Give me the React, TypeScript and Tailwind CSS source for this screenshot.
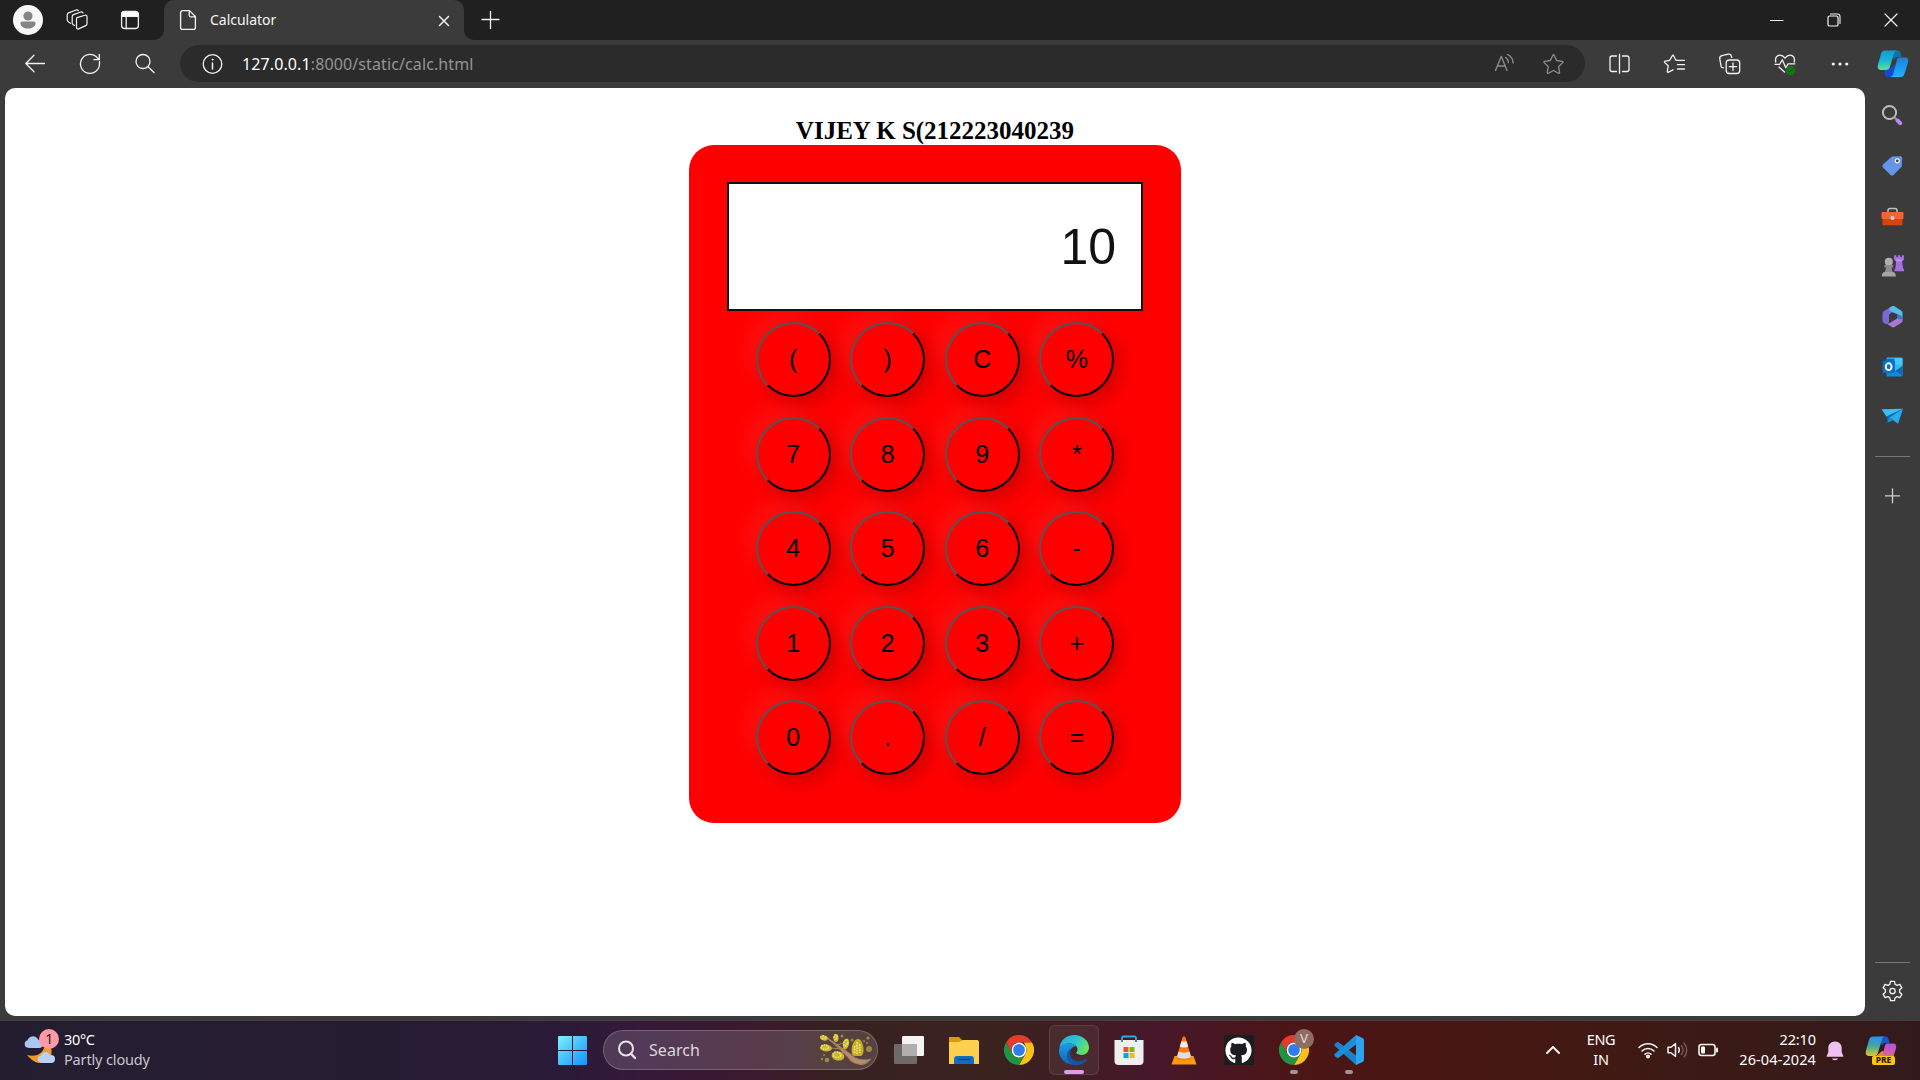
import React from "react";
import { FaGithub } from "react-icons/fa";

type IconProps = { children: React.ReactNode; w?: number; h?: number; className?: string };

/** 1:1 pixel canvas for line and filled icons, defaults to thin white strokes. */
function Icon({ children, w = 24, h = 24, className = "" }: IconProps) {
  return (
    <svg
      width={w}
      height={h}
      viewBox={`0 0 ${w} ${h}`}
      fill="none"
      stroke="#f2f2f2"
      strokeWidth="1.3"
      strokeLinecap="round"
      strokeLinejoin="round"
      className={`block shrink-0 ${className}`}
    >
      {children}
    </svg>
  );
}

function TabStrip() {
  return (
    <div className="flex h-10 shrink-0 items-center bg-[#202020]">
      <Icon w={30} h={30} className="ml-[13px]">
        <g stroke="none">
          <circle cx="15" cy="15" r="15" fill="#f7f7f7" />
          <circle cx="15" cy="11" r="4.6" fill="#858585" />
          <path d="M9 16.500h12a1.500 1.500 0 0 1 1.500 1.500c0 3.600-3.300 5.500-7.500 5.500S7.500 21.600 7.500 18a1.500 1.500 0 0 1 1.500-1.500z" fill="#858585" />
        </g>
      </Icon>
      <Icon className="ml-[22px]">
        <g strokeWidth="1.2">
          <path d="M12 9.600 20 7.200c1.200-.4 2 .3 2 1.500v7.100c0 .8-.4 1.500-1.200 1.800l-7.200 3.300a1.500 1.500 0 0 1-2.100-1.400v-8c0-.9-.1-1.600.5-1.900z" />
          <path d="M9.600 17.500 8 16.500c-.5-.4-.8-1-.8-1.800V8.500c0-.9.400-1.500 1.300-1.900l7.300-2.600c1-.3 1.800 0 2.200 1" />
          <path d="M5.500 15.300 3.600 14c-.9-.6-1.400-1.100-1.400-2V6.900c0-1 .5-1.600 1.400-2l7.500-2.900c.8-.3 1.800-.1 2.200.7" />
        </g>
      </Icon>
      <Icon className="ml-[29px]">
        <rect x="3.600" y="3.700" width="16.800" height="16.800" rx="3" />
        <path d="M3.600 8.300V6.500a3 3 0 0 1 3-3h10.800a3 3 0 0 1 3 3v1.800z" fill="#fff" />
        <path d="M8.200 8v12.300" />
      </Icon>
      <div className="relative ml-[22px] flex h-10 w-[300px] items-center rounded-t-[10px] bg-[#3b3b3b]">
        <svg width="10" height="10" className="absolute bottom-0 -left-[10px]"><path d="M10 0v10H0A10 10 0 0 0 10 0z" fill="#3b3b3b" /></svg>
        <svg width="10" height="10" className="absolute -right-[10px] bottom-0"><path d="M0 0v10h10A10 10 0 0 1 0 0z" fill="#3b3b3b" /></svg>
        <Icon className="ml-3">
          <path d="M13.500 2.600H6.600a2 2 0 0 0-2 2v14.800a2 2 0 0 0 2 2h10.800a2 2 0 0 0 2-2V8.500zM13.200 2.800v4.400c0 1 .6 1.600 1.600 1.600h4.400" />
        </Icon>
        <span className="ml-[10px] w-[80px] text-[14px] leading-5 tracking-[-0.02px] text-[#f5f5f5]">Calculator</span>
        <Icon w={14} h={14} className="mt-[1px] ml-[147px]"><path d="M2.500 2.500l9 9M11.500 2.500l-9 9" strokeWidth="1.500" /></Icon>
      </div>
      <Icon w={20} h={20} className="ml-[17px]"><path d="M9.500 1.500v17M1 9.500h17" /></Icon>
      <div className="ml-auto flex items-center gap-[43px] pr-[22px] pb-px">
        <Icon w={14} h={14}><path d="M.5 7.500h12.500" strokeWidth="1.200" /></Icon>
        <Icon w={14} h={14}><rect x="1" y="3" width="10" height="10" rx="1.600" strokeWidth="1.200" /><path d="M3.500 1h7a2.500 2.500 0 0 1 2.500 2.500v7" strokeWidth="1.100" /></Icon>
        <Icon w={14} h={14}><path d="M1 1l12 12M13 1L1 13" strokeWidth="1.200" /></Icon>
      </div>
    </div>
  );
}

function CopilotLogo({ pre = false }: { pre?: boolean }) {
  return (
    <svg width="32" height="30" viewBox="0 0 32 30" className="block shrink-0">
      <defs>
        <linearGradient id={pre ? "cpa2" : "cpa"} x1="0" y1="0" x2="0" y2="1">
          <stop offset="0" stopColor={pre ? "#2a8df0" : "#159bd0"} />
          <stop offset=".5" stopColor={pre ? "#43a8a0" : "#17b4d8"} />
          <stop offset="1" stopColor={pre ? "#e3ca25" : "#62dda0"} />
        </linearGradient>
        <linearGradient id={pre ? "cpb2" : "cpb"} x1="0" y1="0" x2="0" y2="1">
          <stop offset="0" stopColor={pre ? "#ac52e8" : "#237ce0"} />
          <stop offset="1" stopColor={pre ? "#f8745b" : "#16b6fa"} />
        </linearGradient>
      </defs>
      <path d="M14 1.500h6.500c2.300 0 2.600 1 3.300 3.500l.8 3h-4c-2 0-3 1-3.600 3z" fill={pre ? "#1657c7" : "#0875a8"} />
      <path d="M10 28h7.500c2 0 3-1.200 3.600-3.200L23 18l-6-2-5 4.500-3 .5-1.500 1c.3 3 .9 6 2.500 6z" fill={pre ? "#ed8a2e" : "#1746d8"} />
      <path d="M7.800 1.500H20c-2.300.5-2.900 2.300-3.500 4.500L13 17.500c-.8 2.600-1.800 3.500-4 3.500H4.500C1 21 .2 18.700 1 15.500L4 5c.6-2.300 1.800-3.500 3.800-3.500z" fill={`url(#${pre ? "cpa2" : "cpa"})`} />
      <path d="M21.500 8.500H28c3 0 3.700 2 3 4.800l-3.300 11c-.7 2.300-2 3.700-4.200 3.700H13c2-.5 3-2 3.500-4l3-11.500c.4-2 .8-3.600 2-4z" fill={`url(#${pre ? "cpb2" : "cpb"})`} />
    </svg>
  );
}

function Toolbar() {
  return (
    <div className="flex h-12 shrink-0 items-center bg-[#3b3b3b]">
      <div className="flex w-[180px] items-center pl-[23px]">
        <Icon><path d="M21.500 11.500H3M11 3.300 2.800 11.500l8.200 8.200" /></Icon>
        <Icon className="ml-[31px]"><path d="M21.500 9.500v2.300a9.500 9.500 0 1 1-3.400-7.200L21 7.500M21.300 2.300v5.400h-5.400" /></Icon>
        <Icon className="ml-[31px]"><circle cx="10" cy="9.500" r="7" /><path d="M15 14.800l6 5.700" /></Icon>
      </div>
      <div className="mb-px flex h-[37px] w-[1405px] items-center rounded-full bg-[#2b2b2b]">
        <Icon className="ml-5"><circle cx="12.500" cy="12" r="9.300" /><path d="M12.500 11v6" strokeWidth="1.500" /><circle cx="12.500" cy="7.600" r=".7" fill="#fff" strokeWidth=".6" /></Icon>
        <span className="ml-[18px] text-[16px] leading-6 tracking-[0.11px] whitespace-nowrap text-[#949494]">
          <span className="text-white">127.0.0.1</span>:8000/static/calc.html
        </span>
        <Icon className="ml-auto">
          <g stroke="#8f8f8f">
            <path d="M3.500 18.500 9.300 4.300 15 18.500M5.500 14h7.500" />
            <path d="M13.500 5.500c2 1 2.900 2.600 2.900 5M15.500 2.500c3.700 1.800 5.500 4.500 5.700 8.500" />
          </g>
        </Icon>
        <Icon className="mr-[19px] ml-[26px]"><Star color="#8f8f8f" /></Icon>
      </div>
      <div className="flex items-center pl-[22px]">
        <Icon>
          <path d="M9.500 4H5a2 2 0 0 0-2 2v11.500a2 2 0 0 0 2 2h4.500M15.500 4H20a2 2 0 0 1 2 2v11.500a2 2 0 0 1-2 2h-4.500M12.500 2.200v19" />
        </Icon>
        <Icon className="ml-8">
          <path d="M14.300 8.300 12.700 8 10.600 3.700c-.3-.6-1-.6-1.300 0L6.700 8.300l-4.500.8c-.8.100-1 .9-.4 1.500l3.400 3.200-.9 5.500c-.1.700.6 1.200 1.200.8L10 17.800" />
          <path d="M15 8.300h6.500M14.500 12.700h7M14.500 17h7" />
        </Icon>
        <Icon className="ml-[31px]">
          <rect x="8.200" y="8" width="13.500" height="13.500" rx="3" />
          <path d="M15 11v7.500M11.300 14.700h7.400M5.300 15.900 3.200 15 1.800 7c-.3-1.700.4-2.900 2-3.300l6.500-1.500c1.500-.3 2.600.3 3 1.800l.5 1.500" />
        </Icon>
        <Icon className="ml-[31px]">
          <path d="M2.800 10C1.800 5.700 4 3.200 7 3.200c2.300 0 3.700 1.300 5 3 1.300-1.700 2.700-3 5-3 3 0 5.300 2.500 4.200 6.800M2 12.300h4.800l2.500-4.500 3.500 8 2.300-4h6.700M6 15l5.500 5" />
          <circle cx="17.500" cy="18.500" r="4.600" fill="#107c10" stroke="none" />
          <path d="M15.300 18.600l1.500 1.500 3-3" stroke="#063a06" strokeWidth="1" />
        </Icon>
        <Icon className="ml-[31px]"><g fill="#f2f2f2" stroke="none"><circle cx="5.300" cy="12" r="1.600" /><circle cx="12" cy="12" r="1.600" /><circle cx="18.700" cy="12" r="1.600" /></g></Icon>
        <div className="ml-[25px]"><CopilotLogo /></div>
      </div>
    </div>
  );
}

function Star({ color }: { color: string }) {
  return <path stroke={color} d="M10.900 3.200c.3-.6.9-.6 1.200 0l2.600 5.300 5.600.8c.8.100 1 .8.500 1.300l-4.200 4 1 5.800c.1.700-.5 1.100-1.100.8l-5-2.700-5.100 2.700c-.6.300-1.200-.1-1.100-.8l1-5.800-4.100-4c-.5-.5-.3-1.200.5-1.300l5.600-.8z" />;
}

const keys = ["(", ")", "C", "%", "7", "8", "9", "*", "4", "5", "6", "-", "1", "2", "3", "+", "0", ".", "/", "="];

function Calculator() {
  return (
    <div className="flex h-[678px] w-[492px] flex-col items-center rounded-[25px] bg-[#ff0000] pt-[37px] font-['Liberation_Sans',Arial,sans-serif]">
      <div className="flex h-[129px] w-[416px] items-center justify-end border-2 border-[#111] bg-white pr-[25px] text-[50px] leading-none text-[#111]">
        10
      </div>
      <div className="mt-[11px] grid grid-cols-[repeat(4,75px)] gap-[19.5px]">
        {keys.map((k) => (
          <button
            key={k}
            className="h-[75px] w-[75px] rounded-full border-2 border-t-[#555] border-r-black border-b-black border-l-[#555] text-[25px] leading-none text-black shadow-[-10px_-10px_19px_rgba(255,255,255,0.06),6px_6px_19px_rgba(0,0,0,0.2)]"
          >
            {k}
          </button>
        ))}
      </div>
    </div>
  );
}

function Sidebar() {
  return (
    <div className="flex w-[55px] shrink-0 flex-col items-center bg-[#3b3b3b] pt-[15px]">
      <Icon>
        <circle cx="8.500" cy="9.500" r="6.600" stroke="#bdbdbd" strokeWidth="2" />
        <path d="M13.500 14.500l1.500 1.500" stroke="#999" strokeWidth="2" />
        <path d="M16.500 17.500l2.700 2.700" stroke="#b98af0" strokeWidth="4" />
      </Icon>
      <Icon className="mt-[27px]">
        <path d="M11 2.500 19 2.200a2 2 0 0 1 2.200 2.200l-.4 8.200L12.500 21a2.200 2.200 0 0 1-3 0L2 13.500a2 2 0 0 1 0-3z" fill="#6595e8" stroke="none" />
        <circle cx="16.300" cy="6.800" r="2" fill="#3b3b3b" stroke="#e8f0ff" strokeWidth="1.300" />
      </Icon>
      <Icon className="mt-[27px]">
        <path d="M7 7V5.500c0-1.300.7-2 2-2h5c1.300 0 2 .7 2 2V7" stroke="#c0c0c0" strokeWidth="1.500" />
        <g stroke="none"><rect x="0.500" y="7" width="22" height="7" rx="1" fill="#f26430" /><path d="M1.500 14h20v5a1.200 1.200 0 0 1-1.200 1.200H2.700A1.200 1.200 0 0 1 1.500 19z" fill="#d9430d" /><circle cx="11.500" cy="13" r="2.100" fill="#ccc" /></g>
      </Icon>
      <Icon className="mt-[25px]">
        <g stroke="none">
          <path d="M13 1.200h2.300v1.900h1.500V1.200h2.600v1.900h1.500V1.200H23v4.600l-1.900 1.700.9 6.500 1 1.500v1.800h-9.500v-1.800l1-1.500.6-6.500L13 5.800z" fill="#a56fe0" />
          <path d="M15.200 5.500h5.500v1.700h-5.500z" fill="#c79cf5" />
          <circle cx="7.800" cy="7.700" r="4" fill="#b0b0b0" />
          <path d="M3.300 12.200c0-.8.400-1.200 1.200-1.200h6.600c.8 0 1.200.4 1.200 1.200s-.6 1.200-1.600 1.400c.1 2 .4 3.400 1.500 4.900H3.400c1.100-1.500 1.400-2.900 1.500-4.900-1-.2-1.600-.6-1.600-1.400z" fill="#8c8c8c" />
          <path d="M.8 22.500c0-3 1-4.500 3.200-4.500h7.600c2.200 0 3.200 1.500 3.200 4.500z" fill="#a5a5a5" />
        </g>
      </Icon>
      <Icon className="mt-[27px]">
        <g stroke="none">
          <path d="M11.500 1 3 6C2 6.700 1.500 7.500 1.500 8.700v6.800c0 1.200.5 2 1.500 2.600l1 .6c2 .8 4-.5 4-3V9.500L11.500 7z" fill="#7a6ad6" />
          <path d="M9 2.500 11 1.300c.9-.5 1.700-.5 2.500 0L20 5.500c1 .6 1.500 1.300 1.500 2.500v7c0-2.500-1.300-4-3.500-5L11 7C8.500 6 7.500 3.800 9 2.500z" fill="#54bdec" />
          <path d="M21.500 13v2.500c0 1.200-.5 2-1.500 2.600l-6.500 4c-.9.500-1.600.5-2.500 0l-6.500-4 .5.300c1.500.4 3 0 4.500-1l7-4.200V9.400c3 1.100 5 2 5 3.600z" fill="#a679d6" />
          <path d="M16 9.200l2.500 1c2 .9 3 2.300 3 4.300l-5.500-1.200z" fill="#3e74d0" />
        </g>
      </Icon>
      <Icon className="mt-[26px]">
        <g stroke="none">
          <rect x="5.500" y="2.500" width="16" height="16" rx="1.200" fill="#31b8ee" /><path d="M5.500 3.700h8v6h-8z" fill="#0870c4" /><path d="M13.500 3.200h8v6.500h-8z" fill="#44c9fa" /><path d="M5.500 13 13.500 16l8-4v8a1.500 1.500 0 0 1-1.500 1.500H5.500z" fill="#1688d8" /><path d="M14.500 16l7-5v9.500z" fill="#0f65b8" /><rect x="1.500" y="5.500" width="12.500" height="12.500" rx="1.200" fill="#0870c8" />
        </g>
        <ellipse cx="7.700" cy="11.700" rx="2.900" ry="3.400" stroke="#fff" strokeWidth="1.900" />
      </Icon>
      <Icon className="mt-[25px]">
        <g stroke="none" transform="translate(-.5 .8)"><path d="M1 4.500 22.500 4 6 12z" fill="#3dbcf0" /><path d="M22.500 4 6.500 11.500 7 18z" fill="#0b69b5" /><path d="M22.500 4 9 12.800 17.500 19z" fill="#27abed" /><path d="M7 18l1.500-5.500 4 3z" fill="#1391d5" /></g>
      </Icon>
      <div className="mt-[28px] h-px w-[35px] bg-[#777]" />
      <Icon w={16} h={16} className="mt-[31px]"><path d="M7.500 .8v14M.5 7.800h14" stroke="#d0d0d0" /></Icon>
      <div className="mt-auto h-px w-[35px] bg-[#777]" />
      <Icon className="mt-[16px] mb-[17px]">
        <circle cx="11.500" cy="12" r="2.700" />
        <path d="M9.500 2.300h4l.6 3 1.900 1.100 2.900-1 2 3.400-2.300 2v2.400l2.300 2-2 3.400-2.900-1-1.900 1.100-.6 3h-4l-.6-3-1.900-1.100-2.900 1-2-3.400 2.300-2v-2.400l-2.300-2 2-3.400 2.900 1 1.900-1.100z" />
      </Icon>
    </div>
  );
}

function ChromeLogo() {
  return (
    <svg width="30" height="30" viewBox="0 0 30 30" className="block">
      <path d="M2 7.500A15 15 0 0 1 28 7.500H15a7.500 7.500 0 0 0-6.500 11.250z" fill="#e33b2e" />
      <path d="M28 7.500A15 15 0 0 1 15 30l6.500-11.250A7.500 7.500 0 0 0 21.500 11.250L20 7.500z" fill="#fbc116" />
      <path d="M2 7.500A15 15 0 0 0 15 30l6.500-11.250a7.500 7.500 0 0 1-13 0z" fill="#229342" />
      <circle cx="15" cy="15" r="7.400" fill="#fff" />
      <circle cx="15" cy="15" r="5.900" fill="#2f7ded" />
    </svg>
  );
}

function EdgeLogo() {
  return (
    <svg width="30" height="30" viewBox="0 0 30 30" className="block">
      <defs>
        <linearGradient id="ea" x1="0" y1=".2" x2="1" y2=".6"><stop offset="0" stopColor="#28a9dc" /><stop offset=".5" stopColor="#2cc3d5" /><stop offset="1" stopColor="#6be653" /></linearGradient>
        <linearGradient id="eb" x1="0" y1="0" x2="0" y2="1"><stop offset="0" stopColor="#1d9de4" /><stop offset="1" stopColor="#1063b8" /></linearGradient>
      </defs>
      <path d="M.3 13C1.500 5 7.500 0 15 0c8.500 0 15 5.600 15 12.500 0 4.500-3.300 7.500-7.500 7.500-3.500 0-5.500-1-5.500-2.200 0-.7 1.500-1.400 1.500-3.300C18.500 11 15 8.500 10.500 8.500 6 8.500 2 10.500.3 13z" fill="url(#ea)" />
      <path d="M.2 14C1.300 10.500 5 8.500 9.500 8.500c3.500 0 6 1 7.500 2.700-3-.4-6 3-6 7.300 0 5 3.500 9.500 8 10.500C10 32-1.500 25 .2 14z" fill="url(#eb)" />
      <path d="M12.500 13c-2 2.200-2.500 8 1 11 4 3.400 9.500 2.800 13.500-.2.800-.5 1.500.2 1 1C24 30 18 31 13.500 29.300 6 26 6.500 16 12.500 13z" fill="#1157a3" />
      <path d="M12.800 13.500c2-1.800 5-.8 5.500 1.500-.3 1.800-1.300 2.200-1.300 2.800 0 1 1.800 2.200 5.500 2.200-3 1.500-7 1.300-9-.8-1.600-1.600-1.700-4-.7-5.700z" fill="#44292c" />
    </svg>
  );
}

function TaskCell({ children, mark }: { children: React.ReactNode; mark?: boolean }) {
  return (
    <div className="relative grid h-[50px] w-[55px] shrink-0 place-items-center">
      {children}
      {mark && <span className="absolute bottom-px left-1/2 -ml-1 h-1 w-2 rounded-full bg-[#a69294]" />}
    </div>
  );
}

function SearchArt() {
  const blobs = [[5, 4, 4, 2.500, 15], [17, 4, 2.500, 4, 0], [7, 14, 6, 3.500, 5], [27, 10, 3, 5.500, 15], [19, 22, 6.500, 4.500, 12]];
  const dots = [[23, 2, 1.500], [33, 6, 1.500], [49, 4, 1.600], [45, 7, 1], [50, 15, 3], [48, 9, 1], [8, 26, 2.300], [3, 25, 1.200], [5, 21, 1]];
  return (
    <svg width="54" height="32" viewBox="0 0 54 32" className="block">
      {dots.map(([x, y, r], i) => <circle key={i} cx={x} cy={y} r={r} fill="#9b8a3f" />)}
      <path d="M7 3C18 11 28 17 36 24c5 2.500 10 2.500 15 1.500-5 6-12 5.500-18 2C26 19 17 11 7 3z" fill="#b78d6f" stroke="#a98164" strokeWidth="1.200" />
      <path d="M17 11l8-2M12 14l11 1M24 18l-3 3" stroke="#a98164" strokeWidth="1" />
      {blobs.map(([x, y, rx, ry, a], i) => (
        <g key={i} transform={`rotate(${a} ${x} ${y})`}>
          <ellipse cx={x} cy={y} rx={rx} ry={ry} fill="#cbb52f" />
          <ellipse cx={x - rx * 0.2} cy={y - ry * 0.2} rx={rx * 0.6} ry={ry * 0.6} fill="none" stroke="#eee267" strokeWidth="1.500" strokeDasharray="1.600 .8" />
        </g>
      ))}
      <path d="M39 5c3 0 5 4 5.500 9 .4 4-.5 8-3 8h-5.500c-3 0-3.700-3-3.300-7 .5-6 3.300-10 6.300-10z" fill="#c3ac2a" />
      <path d="M38 8v12M35.500 12v8M40.800 10v9" stroke="#eee267" strokeWidth="1.800" strokeDasharray="1.800 .8" />
    </svg>
  );
}

function Taskbar() {
  return (
    <div className="flex h-[60px] shrink-0 items-center border-t border-[#4a3d40] bg-[linear-gradient(90deg,#241d30_0px,#261c32_400px,#2a1a38_560px,#35183a_640px,#3b1a2e_750px,#38221f_850px,#3a221f_1000px,#46182a_1150px,#4c1516_1300px,#451812_1520px,#3b1a15_1700px,#321a1c_1920px)] text-white">
      <div className="flex w-[545px] items-center pl-6">
        <svg width="36" height="36" viewBox="0 0 36 36" className="mb-[7px] block">
          <path d="M27 18c2 9-1 15.500-10 16-6 0-9-2.500-14-8 8 2 14.500 0 17-7z" fill="#f09a26" />
          <g fill="#a9c6f4"><circle cx="9" cy="13" r="5.800" /><circle cx="4.500" cy="15" r="3.800" /><circle cx="15" cy="15" r="4" /><rect x="4" y="13" width="12" height="6" rx="2" /></g>
          <g fill="#b8d1f8"><circle cx="21.500" cy="28" r="5" /><circle cx="17" cy="30" r="3.300" /><circle cx="27" cy="30" r="4" /><rect x="16" y="29" width="12" height="5" rx="2" /></g>
          <circle cx="25" cy="10" r="10" fill="#ff99a4" />
          <text x="25.300" y="15" textAnchor="middle" fontFamily="Noto Sans" fontSize="14" fill="#2b1a1d" stroke="none">1</text>
        </svg>
        <div className="mb-[4px] ml-1 text-[14.5px] leading-5">
          <div className="tracking-[-0.35px]">30°C</div>
          <div className="tracking-[-0.15px] text-[#c9c5cc]">Partly cloudy</div>
        </div>
      </div>
      <TaskCell>
        <svg width="29" height="29" viewBox="0 0 29 29">
          <defs><linearGradient id="win" x1="0" y1="0" x2="1" y2="1"><stop offset="0" stopColor="#7ff2fc" /><stop offset=".5" stopColor="#46bffc" /><stop offset="1" stopColor="#0f95fb" /></linearGradient></defs>
          <path d="M1 0h13v14H0V1a1 1 0 0 1 1-1zM15 0h13a1 1 0 0 1 1 1v13H15zM0 15h14v14H1a1 1 0 0 1-1-1zM15 15h14v13a1 1 0 0 1-1 1H15z" fill="url(#win)" />
        </svg>
      </TaskCell>
      <div className="mb-px ml-[3px] flex h-10 w-[275px] items-center rounded-full border border-white/20 bg-white/15">
        <Icon w={22} h={22} className="ml-3"><circle cx="10" cy="9.500" r="7" stroke="#e8e0ea" strokeWidth="2" /><path d="M15 14.700l4 4.300" stroke="#e8e0ea" strokeWidth="2.400" /></Icon>
        <span className="ml-[11px] text-[16px] leading-6 tracking-[0.05px] text-[#ddd5df]">Search</span>
        <div className="mr-[4px] ml-auto"><SearchArt /></div>
      </div>
      <div className="mb-px ml-[3px] flex">
        <TaskCell>
          <svg width="30" height="28" viewBox="0 0 30 28"><rect x="8" y="0" width="22" height="20" rx="1" fill="#f4f4f4" /><rect x="0" y="8" width="23" height="20" rx="1" fill="#6f6968" /><rect x="8" y="8" width="15" height="12" fill="#b2aead" /></svg>
        </TaskCell>
        <TaskCell>
          <svg width="30" height="27" viewBox="0 0 30 27"><path d="M0 0h10l4 4h14a2 2 0 0 1 2 2v4H0z" fill="#dc9a0c" /><path d="M0 5h10l4-2h14a2 2 0 0 1 2 2v22H0z" fill="#fdd050" /><path d="M5 27v-5a3 3 0 0 1 3-3h14a3 3 0 0 1 3 3v5z" fill="#0f6fc5" /><path d="M9 22.500h12" stroke="#07447d" strokeWidth="1.500" /></svg>
        </TaskCell>
        <TaskCell><ChromeLogo /></TaskCell>
        <TaskCell>
          <div className="relative grid h-[50px] w-[50px] place-items-center rounded-md border border-white/10 bg-white/6">
            <EdgeLogo />
            <span className="absolute bottom-0 left-[14px] h-1 w-5 rounded-full bg-[#dc9ee8]" />
          </div>
        </TaskCell>
        <TaskCell>
          <svg width="30" height="30" viewBox="0 0 30 30"><path d="M8 8V2.500A1.500 1.500 0 0 1 9.500 1.500h11A1.500 1.500 0 0 1 22 2.500V8" fill="none" stroke="#1cb1e8" strokeWidth="1.800" /><path d="M.5 5h29v21a4 4 0 0 1-4 4h-21a4 4 0 0 1-4-4z" fill="#efefef" /><path d="M8 5v2M22 5v2" stroke="#1487b8" strokeWidth="1.800" /><path d="M9.500 12h5v5h-5z" fill="#f25022" /><path d="M15.500 12h5v5h-5z" fill="#7fba00" /><path d="M9.500 18h5v5h-5z" fill="#00a4ef" /><path d="M15.500 18h5v5h-5z" fill="#ffb900" /></svg>
        </TaskCell>
        <TaskCell>
          <svg width="26" height="29" viewBox="0 0 26 29"><path d="M3.500 20h19L25.500 28.500H.5z" fill="#ff9a0c" /><path d="M11.500 1.500c.3-1.500 2.700-1.500 3 0l6 20.500c-2 3-13 3-15 0z" fill="#f57c08" /><path d="M10.300 5.500h5.400l1.500 5c-2 1.300-6.400 1.300-8.400 0z" fill="#ececec" /><path d="M7.500 15.500c3 1.500 8 1.500 11 0l1.500 5.500c-3 2.300-11 2.300-14 0z" fill="#dedede" /></svg>
        </TaskCell>
        <TaskCell>
          <div className="grid h-[30px] w-[30px] place-items-center bg-[#1d1d1f]"><FaGithub size={27} color="#fff" /></div>
        </TaskCell>
        <TaskCell mark>
          <ChromeLogo />
          <span className="absolute top-[4px] left-[28px] grid h-5 w-5 place-items-center rounded-full bg-[#8d6e63] font-['Liberation_Sans',sans-serif] text-[12px] leading-none text-[#eadfdc]">V</span>
        </TaskCell>
        <TaskCell mark>
          <svg width="30" height="30" viewBox="0 0 30 30"><path d="M1.500 8.200 3 7.200c.6-.4 1.200-.4 1.700 0L22 20.500V30L.7 11c-.8-.8-.6-1.800.8-2.800z" fill="#1b82cb" /><path d="M1.500 21.800 3 22.800c.6.400 1.200.4 1.700 0L22 9.500V0L.7 19c-.8.800-.6 1.800.8 2.800z" fill="#1b8fd9" /><path d="M22 0l6.500 3c1 .5 1.500 1.200 1.500 2.200v19.600c0 1-.5 1.700-1.500 2.200L22 30z" fill="#2ba5f0" /></svg>
        </TaskCell>
      </div>
      <div className="ml-auto flex items-center pr-[23px] pb-px text-[14.5px] leading-5">
        <Icon w={16} h={16}><path d="M2 11l6-6 6 6" strokeWidth="2" /></Icon>
        <div className="mb-[3px] ml-[20px] w-[40px] text-center tracking-[-0.3px]">ENG<br />IN</div>
        <Icon w={22} h={18} className="ml-4">
          <g strokeWidth="1.600"><path d="M2 6.500c5-5 13-5 18 0M5 10c3.300-3.300 8.700-3.300 12 0M8 13.200c1.700-1.700 4.300-1.700 6 0" /><circle cx="11" cy="15.500" r="1.300" fill="#fff" /></g>
        </Icon>
        <Icon w={22} h={18} className="ml-[7px]">
          <path d="M2 6.300h3L9.500 2.500v13L5 11.700H2z" strokeWidth="1.500" /><path d="M12.500 6.500c1 1.500 1 3.500 0 5" strokeWidth="1.500" /><path d="M15.300 4.500c2.200 2.700 2.200 6.300 0 9M18 2c3.500 4.500 3.500 9.500 0 14" stroke="#7a5f5c" strokeWidth="1.300" />
        </Icon>
        <Icon w={22} h={18} className="ml-[9px]">
          <rect x="2" y="3.500" width="16" height="11" rx="2.500" strokeWidth="1.600" /><rect x="4" y="5.500" width="4" height="7" rx="1" fill="#fff" stroke="none" /><path d="M20 7.500v3" strokeWidth="2" />
        </Icon>
        <div className="mb-[3px] ml-[17px] w-[80px] text-right tracking-[0.1px] whitespace-nowrap">
          <div className="tracking-[-0.1px]">22:10</div>
          26-04-2024
        </div>
        <Icon w={18} h={20} className="mt-[2px] ml-[10px]">
          <path d="M9 .5c4.300 0 6.700 3 6.700 6.700v4.300l1.600 3.300c.2.600 0 1-.6 1H1.300c-.6 0-.8-.4-.6-1l1.600-3.300V7.200C2.300 3.500 4.700.5 9 .5zM6 17.500h6c-.5 2.300-5.500 2.300-6 0z" fill="#efc1f2" stroke="none" />
        </Icon>
        <div className="relative ml-[21px]">
          <CopilotLogo pre />
          <span className="absolute bottom-0 left-[7px] grid h-[9px] w-[23px] place-items-center rounded-[2px] bg-[#ffc60a] text-[8.5px] leading-none font-extrabold text-[#2a1d00]">PRE</span>
        </div>
      </div>
    </div>
  );
}

export default function App() {
  return (
    <div className="flex h-[1080px] w-[1920px] flex-col overflow-hidden bg-[#3b3b3b] font-['Noto_Sans','Open_Sans',sans-serif]">
      <TabStrip />
      <Toolbar />
      <div className="flex h-[932px] shrink-0">
        <div className="mb-1 ml-[5px] flex w-[1860px] flex-col items-center rounded-[10px] bg-white pt-[29px]">
          <h1 className="font-['Liberation_Serif','Times_New_Roman',serif] text-[25px] leading-7 font-bold text-black">VIJEY K S(212223040239</h1>
          <Calculator />
        </div>
        <div className="flex pb-0"><Sidebar /></div>
      </div>
      <Taskbar />
    </div>
  );
}
